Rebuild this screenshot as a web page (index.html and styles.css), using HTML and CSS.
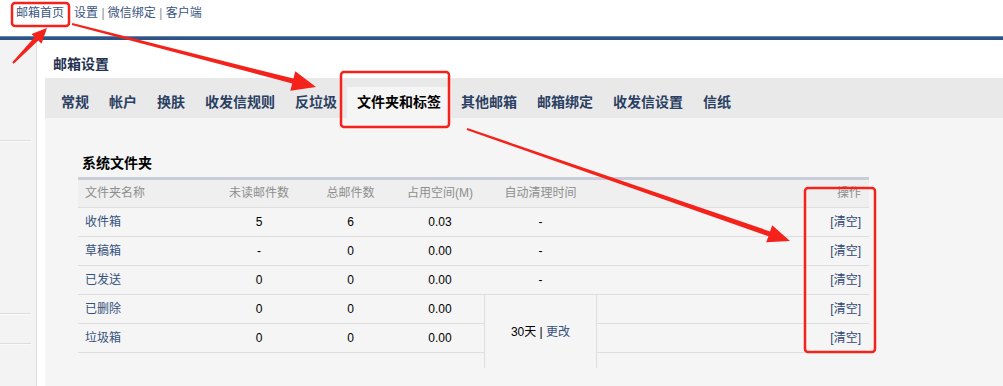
FILE: index.html
```html
<!DOCTYPE html>
<html lang="zh-CN">
  <head>
    <meta charset="UTF-8" />
    <meta name="viewport" content="width=device-width, initial-scale=1.0" />
    <title>邮箱设置</title>
    <link rel="stylesheet" href="styles.css">
  </head>
  <body>
    <div class="topbar">
      <a href="#" class="home">邮箱首页</a><a href="#">设置</a> <span class="sep">|</span> <a href="#">微信绑定</a> <span class="sep">|</span> <a href="#">客户端</a>
    </div>
    <div class="bluebar"></div>

    <div class="layout">
      <div class="sidebar">
        <div class="side-line first"></div>
        <div class="side-line second"></div>
        <div class="side-line third"></div>
      </div>

      <div class="main">
        <div class="main-title">邮箱设置</div>
        <div class="tabs">
          <a href="#" class="tab">常规</a>
          <a href="#" class="tab">帐户</a>
          <a href="#" class="tab">换肤</a>
          <a href="#" class="tab">收发信规则</a>
          <a href="#" class="tab">反垃圾</a>
          <a href="#" class="tab active">文件夹和标签</a>
          <a href="#" class="tab">其他邮箱</a>
          <a href="#" class="tab">邮箱绑定</a>
          <a href="#" class="tab">收发信设置</a>
          <a href="#" class="tab">信纸</a>
        </div>

        <div class="panel">
          <h3 class="section-title">系统文件夹</h3>
          <table class="folders">
            <colgroup>
              <col class="c-name" />
              <col class="c-num" />
              <col class="c-num2" />
              <col class="c-size" />
              <col class="c-auto" />
              <col />
            </colgroup>
            <thead>
              <tr>
                <th class="name">文件夹名称</th>
                <th>未读邮件数</th>
                <th>总邮件数</th>
                <th>占用空间(M)</th>
                <th>自动清理时间</th>
                <th class="op">操作</th>
              </tr>
            </thead>
            <tbody>
              <tr>
                <td class="name"><a href="#">收件箱</a></td>
                <td>5</td>
                <td>6</td>
                <td>0.03</td>
                <td>-</td>
                <td class="op"><a href="#">[清空]</a></td>
              </tr>
              <tr>
                <td class="name"><a href="#">草稿箱</a></td>
                <td>-</td>
                <td>0</td>
                <td>0.00</td>
                <td>-</td>
                <td class="op"><a href="#">[清空]</a></td>
              </tr>
              <tr>
                <td class="name"><a href="#">已发送</a></td>
                <td>0</td>
                <td>0</td>
                <td>0.00</td>
                <td>-</td>
                <td class="op"><a href="#">[清空]</a></td>
              </tr>
              <tr>
                <td class="name"><a href="#">已删除</a></td>
                <td>0</td>
                <td>0</td>
                <td>0.00</td>
                <td class="auto" rowspan="3">30天 | <a href="#">更改</a></td>
                <td class="op"><a href="#">[清空]</a></td>
              </tr>
              <tr>
                <td class="name"><a href="#">垃圾箱</a></td>
                <td>0</td>
                <td>0</td>
                <td>0.00</td>
                <td class="op"><a href="#">[清空]</a></td>
              </tr>
              <tr class="filler">
                <td></td>
                <td></td>
                <td></td>
                <td></td>
                <td></td>
              </tr>
            </tbody>
          </table>
        </div>
      </div>
    </div>

    <!-- red annotation marks drawn over the page -->
    <svg class="marks" width="1003" height="386" viewBox="0 0 1003 386">
      <g fill="none" stroke="#f5221b" stroke-width="2.5">
        <rect x="12" y="3" width="57" height="23" rx="3" />
        <rect x="341" y="72" width="108" height="55" rx="3" />
        <rect x="805" y="188" width="70" height="164" rx="3" />
      </g>
      <g fill="#f5221b">
        <polygon points="13.7,63.7 38.3,40.5 41.5,43.7 47,28 31.5,33.9 34.7,37.1 12.3,62.3" />
        <polygon points="71.8,25 292.2,83.4 290.3,90.7 316,87 295.3,71.3 293.4,78.6 72.3,23" />
        <polygon points="466.7,130 768.4,236.2 766.2,242.3 790,241 772.2,225.3 770,231.4 467.3,128" />
      </g>
    </svg>
  </body>
</html>
```

FILE: styles.css
```css
body {
  margin: 0;
  padding: 0;
  font-family: "Liberation Sans", "Noto Sans CJK SC", sans-serif;
  font-size: 12px;
  color: #000;
  background: #fff;
  position: relative;
  width: 1003px;
  height: 386px;
  overflow: hidden;
}
a {
  color: #34507c;
  text-decoration: none;
}
.topbar {
  height: 36px;
  padding: 0 16px;
  line-height: 26px;
  box-sizing: border-box;
}
.topbar a {
  color: #3a5482;
}
.topbar .home {
  margin-right: 10px;
}
.topbar .sep {
  color: #8c8c8c;
}
.bluebar {
  height: 3px;
  background: #2e5486;
  border-top: 1px solid #6886ad;
}
.layout {
  display: flex;
  height: 346px;
}
.sidebar {
  width: 36px;
  background: #f3f3f3;
  border-right: 1px solid #dcdcdc;
  margin-right: 8px;
}
.side-line {
  height: 1px;
  margin-right: 5px;
  background: #dddddd;
  border-bottom: 1px solid #fafafa;
}
.side-line.first {
  margin-top: 100px;
}
.side-line.second {
  margin-top: 171px;
}
.side-line.third {
  margin-top: 28px;
}
.main {
  flex: 1;
  display: flex;
  flex-direction: column;
}
.main-title {
  height: 38px;
  box-sizing: border-box;
  padding: 14px 0 0 8px;
  line-height: 20px;
  font-size: 14px;
  font-weight: bold;
  color: #1f3250;
}
.tabs {
  display: flex;
  height: 40px;
  box-sizing: border-box;
  padding: 9px 0 0 6px;
  background: #e9e9e9;
}
.tab {
  height: 31px;
  line-height: 31px;
  padding: 0 10px;
  font-size: 14px;
  font-weight: bold;
  color: #2a3f62;
}
.tab.active {
  background: #f5f5f5;
  color: #000;
}
.panel {
  flex: 1;
  background: #f5f5f5;
  padding: 35px 0 0 33px;
}
.section-title {
  margin: 0 0 4px 4px;
  font-size: 14px;
  line-height: 20px;
  font-weight: bold;
  color: #000;
}
.folders {
  width: 791px;
  table-layout: fixed;
  border-collapse: separate;
  border-spacing: 0;
}
.c-name {
  width: 135px;
}
.c-num {
  width: 92px;
}
.c-num2 {
  width: 91px;
}
.c-size {
  width: 88px;
}
.c-auto {
  width: 113px;
}
th,
td {
  padding: 0;
  text-align: center;
  font-weight: normal;
  white-space: nowrap;
}
th {
  line-height: 27px;
  color: #8e8e8e;
  background: #efefef;
  border-top: 3px solid #c9cdd9;
  border-bottom: 1px solid #dedede;
}
td {
  line-height: 28px;
  padding-top: 1px;
  height: 27px;
  line-height: 27px;
  border-bottom: 1px solid #dedede;
}
th.name,
td.name {
  text-align: left;
  padding-left: 7px;
}
th.op,
td.op {
  text-align: right;
  padding-right: 8px;
}
td.op a {
  color: #2e4674;
}
td.auto {
  border-left: 1px solid #dedede;
  border-right: 1px solid #dedede;
  border-bottom: none;
}
.filler td {
  height: 15px;
  line-height: 15px;
  padding-top: 0;
  border-bottom: none;
}
.marks {
  position: absolute;
  top: 0;
  left: 0;
  pointer-events: none;
}
```
